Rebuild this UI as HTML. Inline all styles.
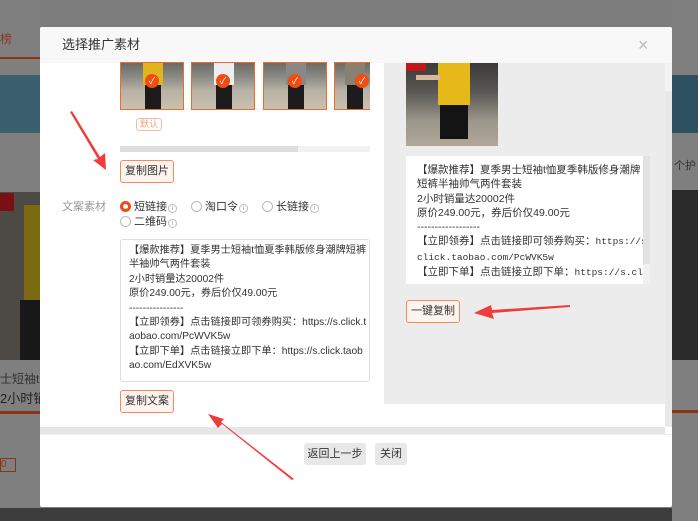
<!DOCTYPE html>
<html><head><meta charset="utf-8">
<style>
*{margin:0;padding:0;box-sizing:border-box}
body{width:698px;height:521px;overflow:hidden;position:relative;background:#7d7d7d;font-family:"Liberation Sans","Noto Sans CJK SC",sans-serif;font-size:12px;color:#333}
.abs{position:absolute}
.modal{left:40px;top:27px;width:632px;height:480px;background:#fff;border-radius:2px;overflow:hidden}
.hd{left:0;top:0;width:632px;height:36px;background:#f8f8f8;font-size:13px;line-height:36px;padding-left:22px;color:#333}
.thumb{top:35px;width:64px;height:48px;border:1px solid #f06a2a;background:linear-gradient(180deg,#6b6b68 0,#8a8a84 30%,#b8b2a4 60%,#c9c1b0 100%);overflow:hidden}
.thumb .p{position:absolute;left:22px;top:0;width:20px;height:22px}
.thumb .l{position:absolute;left:24px;top:22px;width:16px;height:24px;background:#1b1b1b}
.thumb .c{position:absolute;left:24px;top:11px;width:14px;height:14px;border-radius:50%;background:#f04d12;color:#fff;font-size:9px;line-height:14px;text-align:center}
.btn{border:1px solid #f58b5a;background:#fff5f0;border-radius:3px;font-size:11px;text-align:center;color:#333}
.radio{display:inline-block;width:11px;height:11px;border:1px solid #bbb;border-radius:50%;vertical-align:-2px;margin-right:3px;background:#fff}
.radio.on{border:3px solid #f04d12}
.i{display:inline-block;width:9px;height:9px;border:1px solid #bbb;border-radius:50%;font-size:7px;line-height:8px;text-align:center;color:#aaa;vertical-align:0;margin-left:1px}
.fb{background:#e8e8e8;border-radius:3px;font-size:11px;line-height:22px;text-align:center;color:#333}
.mono{font-family:"Liberation Mono",monospace;font-size:9.5px}
</style></head><body>
<div class="abs" style="left:0;top:0;width:40px;height:521px;background:#7f7f7f"></div>
<div class="abs" style="left:0;top:30px;width:20px;height:14px;color:#8a3a1c;font-size:12px">榜</div>
<div class="abs" style="left:0;top:57px;width:40px;height:2px;background:#8a3510"></div>
<div class="abs" style="left:0;top:75px;width:40px;height:58px;background:#3a6070"></div>
<div class="abs" style="left:0;top:192px;width:40px;height:168px;background:#4d4944"></div>
<div class="abs" style="left:0;top:193px;width:14px;height:18px;background:#7a1014"></div>
<div class="abs" style="left:24px;top:205px;width:16px;height:95px;background:#7a6a10"></div>
<div class="abs" style="left:20px;top:300px;width:20px;height:60px;background:#181818"></div>
<div class="abs" style="left:0;top:370px;width:40px;height:16px;font-size:12px;color:#333;white-space:nowrap;overflow:hidden">士短袖t恤</div>
<div class="abs" style="left:0;top:388px;width:40px;height:16px;font-size:13px;color:#222;white-space:nowrap;overflow:hidden">2小时销量</div>
<div class="abs" style="left:0;top:411px;width:40px;height:3px;background:#8a3510"></div>
<div class="abs" style="left:0;top:458px;width:16px;height:14px;border:1px solid #8a3510;color:#8a3510;font-size:10px;overflow:hidden">0元</div>
<div class="abs" style="left:0;top:508px;width:698px;height:13px;background:#3d3d3d"></div>
<div class="abs" style="left:672px;top:0;width:26px;height:521px;background:#7f7f7f"></div>
<div class="abs" style="left:672px;top:75px;width:26px;height:58px;background:#2d5060"></div>
<div class="abs" style="left:672px;top:190px;width:26px;height:170px;background:#2a2a2a"></div>
<div class="abs" style="left:674px;top:157px;color:#333;font-size:11px">个护</div>
<div class="abs" style="left:672px;top:410px;width:26px;height:3px;background:#8a3510"></div>
<div class="abs modal">
 <div class="abs hd">选择推广素材</div>
 <div class="abs" style="left:598px;top:8px;font-size:18px;color:#bbb;line-height:20px">×</div>
 <div class="abs thumb" style="left:80px"><div class="p" style="background:#e0b41c"></div><div class="l"></div><div class="c">✓</div></div>
 <div class="abs thumb" style="left:151px"><div class="p" style="background:#eee"></div><div class="l"></div><div class="c">✓</div></div>
 <div class="abs thumb" style="left:223px"><div class="p" style="background:#888"></div><div class="l"></div><div class="c">✓</div></div>
 <div class="abs thumb" style="left:294px;width:36px;border-right:none"><div class="p" style="background:#888070;left:10px"></div><div class="l" style="left:12px"></div><div class="c" style="left:20px">✓</div></div>
 <div class="abs" style="left:96px;top:91px;width:26px;height:13px;border:1px solid #f8b9a0;border-radius:3px;color:#f8a080;font-size:9px;line-height:11px;text-align:center">默认</div>
 <div class="abs" style="left:80px;top:119px;width:250px;height:6px;background:#f1f1f1"></div>
 <div class="abs" style="left:80px;top:119px;width:178px;height:6px;background:#ddd"></div>
 <div class="abs btn" style="left:80px;top:133px;width:54px;height:23px;line-height:21px">复制图片</div>
 <div class="abs" style="left:22px;top:171px;color:#999;font-size:11px">文案素材</div>
 <div class="abs" style="left:80px;top:171px;font-size:11px;white-space:nowrap"><span class="radio on"></span>短链接<span class="i">i</span><span style="display:inline-block;width:14px"></span><span class="radio"></span>淘口令<span class="i">i</span><span style="display:inline-block;width:14px"></span><span class="radio"></span>长链接<span class="i">i</span></div>
 <div class="abs" style="left:80px;top:186px;font-size:11px"><span class="radio"></span>二维码<span class="i">i</span></div>
 <div class="abs" style="left:80px;top:212px;width:250px;height:143px;border:1px solid #ddd;border-radius:3px;padding:4px 2px 0 8px;font-size:10.2px;line-height:14.4px;color:#333;word-break:break-all">【爆款推荐】夏季男士短袖t恤夏季韩版修身潮牌短裤半袖帅气两件套装<br>2小时销量达20002件<br>原价249.00元，券后价仅49.00元<br>----------------<br>【立即领券】点击链接即可领券购买：https://s.click.taobao.com/PcWVK5w<br>【立即下单】点击链接立即下单：https://s.click.taobao.com/EdXVK5w</div>
 <div class="abs btn" style="left:80px;top:363px;width:54px;height:23px;line-height:21px">复制文案</div>
 <div class="abs" style="left:344px;top:36px;width:281px;height:341px;background:#ececec"></div>
 <div class="abs" style="left:366px;top:36px;width:92px;height:83px;background:linear-gradient(180deg,#3a3a3a 0,#5a5854 35%,#9c978c 70%,#b0a898 100%);overflow:hidden">
  <div class="abs" style="left:0;top:0;width:20px;height:8px;background:#c01818"></div>
  <div class="abs" style="left:32px;top:0;width:32px;height:42px;background:#e6b81a"></div>
  <div class="abs" style="left:10px;top:12px;width:24px;height:5px;background:#d8b89c"></div>
  <div class="abs" style="left:34px;top:42px;width:28px;height:34px;background:#141414"></div>
 </div>
 <div class="abs" style="left:366px;top:129px;width:237px;height:128px;background:#fff;padding:7px 0 0 11px;font-size:10.5px;line-height:14.3px;color:#333;overflow:hidden;white-space:nowrap">【爆款推荐】夏季男士短袖t恤夏季韩版修身潮牌<br>短裤半袖帅气两件套装<br>2小时销量达20002件<br>原价249.00元，券后价仅49.00元<br>------------------<br>【立即领券】点击链接即可领券购买：<span class="mono">https://s.</span><br><span class="mono">click.taobao.com/PcWVK5w</span><br>【立即下单】点击链接立即下单：<span class="mono">https://s.clic</span></div>
 <div class="abs" style="left:603px;top:129px;width:7px;height:128px;background:#f1f1f1"></div>
 <div class="abs" style="left:603px;top:129px;width:7px;height:108px;background:#e2e2e2"></div>
 <div class="abs btn" style="left:366px;top:273px;width:54px;height:23px;line-height:21px">一键复制</div>
 <div class="abs" style="left:625px;top:36px;width:7px;height:364px;background:#e8e8e8"></div>
 <div class="abs" style="left:625px;top:36px;width:7px;height:28px;background:#f4f4f4"></div>
 <div class="abs" style="left:0;top:400px;width:625px;height:7px;background:#e6e6e6"></div>
 <div class="abs" style="left:0;top:407px;width:632px;height:1px;background:#eee"></div>
 <div class="abs fb" style="left:264px;top:416px;width:62px;height:22px">返回上一步</div>
 <div class="abs fb" style="left:335px;top:416px;width:32px;height:22px">关闭</div>
</div>
<svg class="abs" style="left:0;top:0" width="698" height="521">
 <g fill="#f03c3c">
  <polygon points="70,112 72,111 100,157 105,153 106,170 93,160 98,159"/>
  <polygon points="570,305 570,307 492,313 494,319 474,313 491,305 492,310"/>
  <polygon points="294,479 292,480 222,424 218,428 208,414 224,419 221,422"/>
 </g>
</svg>
</body></html>
